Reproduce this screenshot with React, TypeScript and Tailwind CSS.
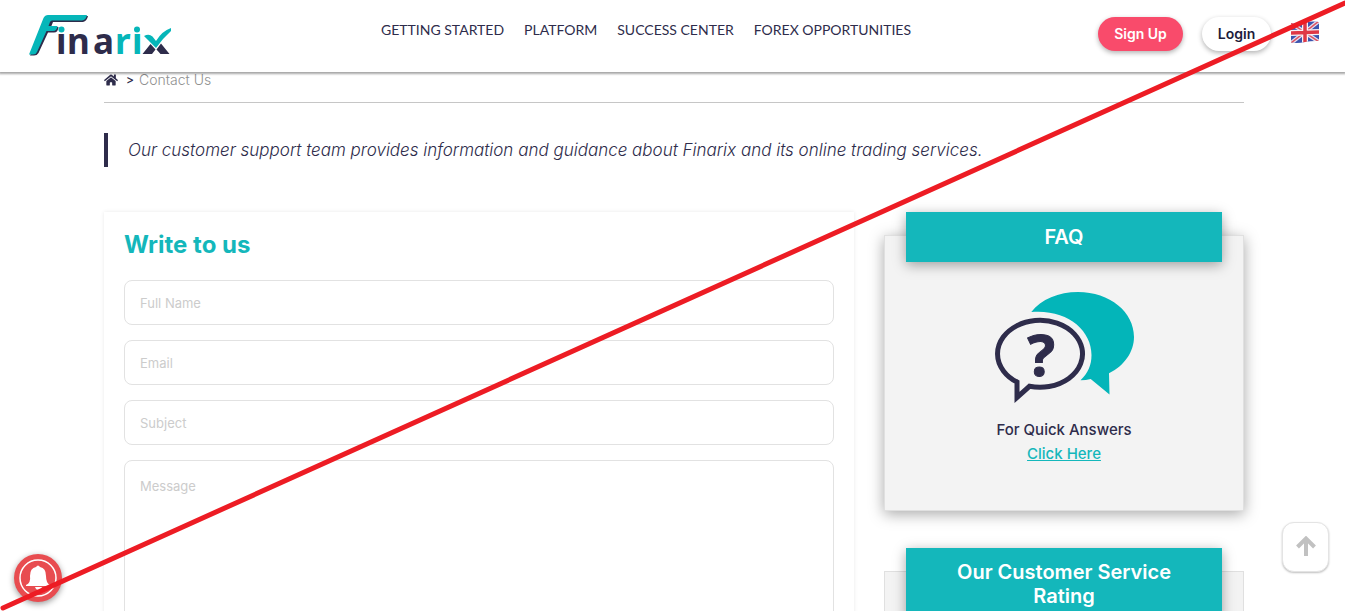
import React from "react";
import { FaHome } from "react-icons/fa";

const navItems = ["GETTING STARTED", "PLATFORM", "SUCCESS CENTER", "FOREX OPPORTUNITIES"];

function Logo() {
  return (
    <svg width="144" height="68" viewBox="28 4 144 68" role="img" aria-label="Finarix">
      <path
        d="M49 16H88Q87 21 83 22H53L51 27H58.500Q58 32.500 54 32.500H48L38.500 53Q37 55.500 34 55.500H30Z"
        fill="#2e2c4b"
      />
      <path
        d="M48 15H87Q86 20 82 20.500H52Q50.500 20.500 50 22L48.500 26H57.500Q57 31 53 31H46.500L37 52Q36 54.500 33 54.500H29L43.500 18Q45 15 48 15Z"
        fill="#06b6b9"
      />
      <g fontFamily="'Noto Sans', sans-serif" fontSize="35" fontWeight="700">
        <text x="56 67 93" y="54" fill="#2e2c4b">ına</text>
        <text x="115 132" y="54" fill="#06b6b9">rı</text>
      </g>
      <circle cx="61.500" cy="29.500" r="3" fill="#06b6b9" />
      <circle cx="137" cy="29.500" r="3" fill="#06b6b9" />
      <path d="M144 36Q149 33.500 152.500 36.500L156 41Q162 31 171 28V31Q163 38 156 48Z" fill="#06b6b9" />
      <path d="M142.500 54L150.500 44L155.500 49.500L152 54ZM161 43.500L169.500 54H160.500L156.500 49.500Z" fill="#2e2c4b" />
    </svg>
  );
}

function Flag() {
  return (
    <svg width="28" height="22" viewBox="0 0 28 22" aria-hidden="true">
      <defs>
        <clipPath id="flag">
          <path d="M0 2Q7 3 14 1.500T28 1V20Q21 19.500 14 21T0 21.500Z" />
        </clipPath>
      </defs>
      <g clipPath="url(#flag)">
        <path d="M0 0H28V22H0Z" fill="#3c54ae" />
        <path d="M0 2L28 21M28 0L0 22" stroke="#e4dff0" strokeWidth="4" />
        <path d="M0 2L28 21M28 0L0 22" stroke="#dd5463" strokeWidth="1.500" />
        <path d="M14 0V22M0 12L28 11" stroke="#f6f2f7" strokeWidth="6" />
        <path d="M14 0V22M0 12L28 11" stroke="#df3846" strokeWidth="3.500" />
      </g>
    </svg>
  );
}

function Bubbles() {
  return (
    <svg width="138" height="110" viewBox="0 0 138 110" className="overflow-visible" aria-hidden="true">
      <path
        d="M36.300 20C46 7 64 0 83 0C115 0 139 20 139 45C139 60 129 74 114 81.300L114.500 102.500L95.700 87Q91 88.300 85.500 88.300C93 81 96.500 73 96.500 63C96.500 38 72 17 36.300 20Z"
        fill="#03b5b9"
      />
      <path
        d="M34.500 94.300A42.500 33.500 0 1 0 22 90V105.500Z"
        fill="none"
        stroke="#2e2c4b"
        strokeWidth="5"
      />
      <text
        x="46"
        y="84"
        textAnchor="middle"
        fontFamily="'Noto Sans', sans-serif"
        fontSize="58"
        fontWeight="700"
        fill="#2e2c4b"
        stroke="#2e2c4b"
        strokeWidth="1"
      >
        ?
      </text>
    </svg>
  );
}

function SideCard({ title, children }: { title: string; children?: React.ReactNode }) {
  return (
    <section className="flex flex-col items-center">
      <h2 className="relative z-10 flex min-h-[50px] w-[316px] items-center justify-center bg-[#14b7bb] px-8 py-3 text-center text-xl leading-6 font-semibold text-white shadow-[0_3px_12px_rgba(0,0,0,0.35)]">
        {title}
      </h2>
      {children}
    </section>
  );
}

const fieldClass =
  "block w-full rounded-lg border border-[#e2e2e2] bg-white px-[15px] text-[13px] placeholder:text-[#cccccc] outline-none";

function Field({ id, label, type = "text" }: { id: string; label: string; type?: string }) {
  return <input id={id} name={id} type={type} aria-label={label} placeholder={label} className={`${fieldClass} h-[45px]`} />;
}

export default function App() {
  return (
    <div className="relative h-screen overflow-hidden bg-white font-['Inter',sans-serif] text-[#2e2c4b]">
      <header className="relative z-20 flex h-[72px] items-start bg-white pr-[26px] pl-7 shadow-[0_1px_2px_1px_rgba(0,0,0,0.35)]">
        <a href="#" className="mt-1 shrink-0"><Logo /></a>
        <nav className="mt-5 ml-[209px] flex gap-5 font-['Lato',sans-serif] text-[14px] leading-5 whitespace-nowrap">
          {navItems.map((n) => <a key={n} href="#">{n}</a>)}
        </nav>
        <div className="ml-auto flex shrink-0 items-start pt-[17px] text-[14px] font-semibold">
          <button className="h-[34px] w-[85px] rounded-full bg-[#f94b6b] pb-0.5 text-white shadow-[0_2px_5px_rgba(0,0,0,0.3)]">Sign Up</button>
          <button className="ml-[19px] h-[34px] w-[69px] rounded-full bg-white pb-0.5 text-[#1e1c3b] shadow-[0_2px_5px_rgba(0,0,0,0.3)]">Login</button>
          <button aria-label="Language: English" className="mt-1 ml-5"><Flag /></button>
        </div>
      </header>

      <main className="pr-[101px] pl-[104px]">
        <div className="flex h-[31px] items-start border-b border-[#c6c6c6] text-[14px] leading-4 font-light">
          <a href="#" aria-label="Home"><FaHome className="h-4 w-[14px]" /></a>
          <span className="ml-2 text-[12px] font-medium">&gt;</span>
          <span className="ml-[5px] text-[#909090]">Contact Us</span>
        </div>

        <p className="mt-[30px] border-l-4 border-[#2e2c4b] pl-5 text-[17px] leading-[34px] font-light italic">
          Our customer support team provides information and guidance about Finarix and its online trading services.
        </p>

        <div className="mt-[45px] grid grid-cols-[1fr_360px] items-start gap-[30px]">
          <form className="px-5 pt-4 pb-5 shadow-[0_0_4px_rgba(0,0,0,0.09)]">
            <h1 className="text-[24px] leading-[34px] font-bold text-[#14b7bb]">Write to us</h1>
            <div className="mt-[18px] flex flex-col gap-[15px]">
              <Field id="name" label="Full Name" />
              <Field id="email" label="Email" type="email" />
              <Field id="subject" label="Subject" />
              <textarea id="message" name="message" aria-label="Message" placeholder="Message" className={`${fieldClass} h-60 resize-none pt-4`} />
            </div>
          </form>

          <aside className="flex flex-col gap-[37px]">
            <SideCard title="FAQ">
              <div className="-mt-[27px] flex h-[276px] w-full flex-col items-center border border-[#e0e0e0] bg-[#f3f3f3] pt-14 text-[15px] leading-6 font-medium shadow-[0_3px_14px_rgba(0,0,0,0.35)]">
                <Bubbles />
                <p className="mt-4">For Quick Answers</p>
                <a href="#" className="text-[#14b7bb] underline">Click Here</a>
              </div>
            </SideCard>
            <SideCard title="Our Customer Service Rating">
              <div className="-mt-[49px] h-60 w-full border border-[#e0e0e0] bg-[#f3f3f3]" />
            </SideCard>
          </aside>
        </div>
      </main>

      <button aria-label="Notifications" className="absolute bottom-[9px] left-3.5 z-20 size-12 rounded-full bg-[#e84c50] shadow-[0_2px_6px_rgba(0,0,0,0.4)]">
        <svg viewBox="0 0 48 48" aria-hidden="true">
          <circle cx="24" cy="24" r="18" fill="none" stroke="#fff" strokeWidth="1.500" />
          <path d="M12 31Q17 29 16 22Q16 14 22 13Q24 10 26 13Q32 14 32 22Q32 29 36 31V32H12ZM21 33H28Q27 36 24.500 36Q22 36 21 33Z" fill="#fff" />
        </svg>
      </button>

      <button aria-label="Back to top" className="absolute right-4 bottom-[39px] z-20 flex h-[50px] w-[47px] items-center justify-center rounded-xl border border-[#e4e4e4] bg-white shadow-[0_1px_2px_rgba(0,0,0,0.25)]">
        <svg width="20" height="20" viewBox="0 0 20 20" className="mb-0.5" fill="none" stroke="#c1c1c1" strokeWidth="4" aria-hidden="true">
          <path d="M10 20V3M1.500 11L10 2.500L18.500 11" />
        </svg>
      </button>

      <svg className="pointer-events-none absolute inset-0 z-30 h-full w-full" viewBox="0 0 1345 611" preserveAspectRatio="none" aria-hidden="true">
        <path d="M3 608L1345 3" stroke="#ed1c24" strokeWidth="5" strokeLinecap="round" />
      </svg>
    </div>
  );
}
